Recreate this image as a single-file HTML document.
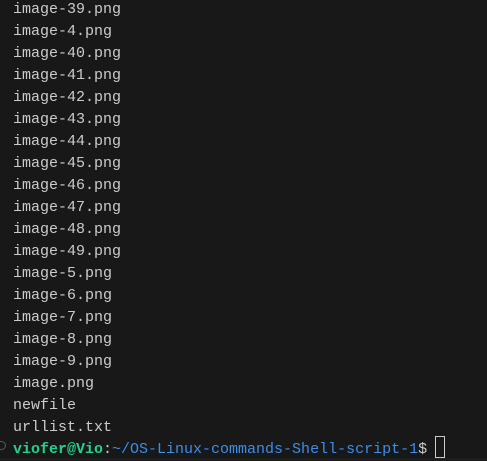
<!DOCTYPE html>
<html><head><meta charset="utf-8"><style>
html,body{margin:0;padding:0;background:#181818;width:487px;height:460px;overflow:hidden}
.t{position:absolute;left:13px;top:-1px;font-family:"Liberation Mono",monospace;font-size:15px;line-height:22px;color:#cccccc;white-space:pre}
.g{color:#23d18b;font-weight:bold}.b{color:#3b8eea}
.cur{position:absolute;left:435px;top:436px;width:8px;height:20px;border:1px solid #cccccc}
.dot{position:absolute;left:0;top:441px;width:5px;height:7px;border:1.5px solid #5a5a5a;border-left:none;border-radius:0 5px 5px 0}
.bot{position:absolute;left:0;top:458px;width:487px;height:2px;background:#1f1f1f}
</style></head><body>
<div class="t">image-39.png
image-4.png
image-40.png
image-41.png
image-42.png
image-43.png
image-44.png
image-45.png
image-46.png
image-47.png
image-48.png
image-49.png
image-5.png
image-6.png
image-7.png
image-8.png
image-9.png
image.png
newfile
urllist.txt
<span class="g">viofer@Vio</span>:<span class="b">~/OS-Linux-commands-Shell-script-1</span>$ </div>
<div class="dot"></div>
<div class="cur"></div>
<div class="bot"></div>
</body></html>
